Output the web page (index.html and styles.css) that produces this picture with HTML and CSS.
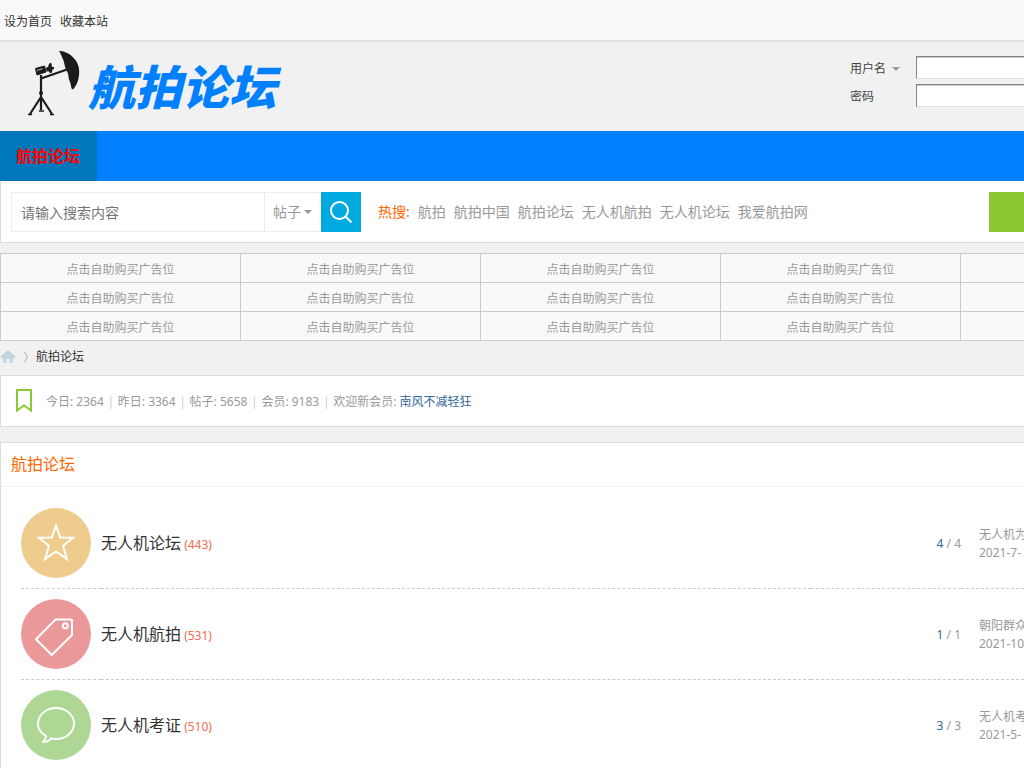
FILE: index.html
```html
<!DOCTYPE html>
<html lang="zh-CN">
<head>
<meta charset="utf-8">
<title>航拍论坛</title>
<link rel="stylesheet" href="styles.css">
</head>
<body>
<div class="page">
  <div class="topbar">
    <a href="#">设为首页</a>
    <a href="#">收藏本站</a>
  </div>
  <header class="header">
    <a class="logo" href="#">
      <svg class="logo-mark" viewBox="0 0 54 66" aria-hidden="true">
        <path d="M31 .7C43 2 51 11 51.200 21c0 8-2 14-6.200 18.500l-1.500-1-1-5-1.500-4-1-6-2.500-5-2-8-3-7z" fill="#1c1a1b"/>
        <path d="M13 28.500L39 19.500M13 25v35M13 47L2 64M13 47l11 17" stroke="#1c1a1b" stroke-width="2.200" fill="none"/>
        <path d="M0 64.500h4M22 64.500h4M11 61h5" stroke="#1c1a1b" stroke-width="1.500"/>
        <circle cx="13" cy="43" r="2" fill="#1c1a1b"/>
        <path d="M7.500 18.500l9-2.500 1.500 6-9 3z" fill="#1c1a1b" stroke="#1c1a1b" stroke-linejoin="round"/>
        <path d="M9 20.500l5.500-1.800" stroke="#bbb" stroke-width="1"/>
        <path d="M18 17.500l2-.5 1-3 1.500-1.200 1 .8.500 3.500h2v2l-1.500.5-.5 3-1.500.7-2-2-2 .2z" fill="#1c1a1b"/>
      </svg>
      <span class="logo-text">航拍论坛</span>
    </a>
    <form class="login">
      <div class="login-row">
        <span class="login-label"><select class="user-select" aria-label="登录方式"><option>用户名</option></select><i class="caret"></i></span>
        <input class="login-input" type="text" aria-label="用户名">
      </div>
      <div class="login-row">
        <label class="login-label" for="pw">密码</label>
        <input class="login-input" id="pw" type="password">
      </div>
    </form>
  </header>
  <nav class="nav"><a class="nav-item" href="#">航拍论坛</a></nav>
  <div class="search-panel">
    <form class="search">
      <input class="search-input" type="text" placeholder="请输入搜索内容" aria-label="搜索">
      <span class="search-type"><select class="type-select" aria-label="搜索类型"><option>帖子</option></select><i class="caret"></i></span>
      <button class="search-button" type="button" aria-label="搜索">
        <svg width="24" height="24" viewBox="0 0 24 24" fill="none" stroke="#fff" stroke-width="2" aria-hidden="true"><circle cx="10.500" cy="10.500" r="8.500"/><path d="M16.500 16.500l6 6"/></svg>
      </button>
    </form>
    <div class="hot">
      <strong class="hot-title">热搜:</strong>
      <a href="#">航拍</a><a href="#">航拍中国</a><a href="#">航拍论坛</a><a href="#">无人机航拍</a><a href="#">无人机论坛</a><a href="#">我爱航拍网</a>
    </div>
    <button class="post-button" type="button" aria-label="发帖"></button>
  </div>
  <table class="ads">
    <tr><td><a href="#">点击自助购买广告位</a></td><td><a href="#">点击自助购买广告位</a></td><td><a href="#">点击自助购买广告位</a></td><td><a href="#">点击自助购买广告位</a></td><td></td></tr>
    <tr><td><a href="#">点击自助购买广告位</a></td><td><a href="#">点击自助购买广告位</a></td><td><a href="#">点击自助购买广告位</a></td><td><a href="#">点击自助购买广告位</a></td><td></td></tr>
    <tr><td><a href="#">点击自助购买广告位</a></td><td><a href="#">点击自助购买广告位</a></td><td><a href="#">点击自助购买广告位</a></td><td><a href="#">点击自助购买广告位</a></td><td></td></tr>
  </table>
  <div class="crumbs">
    <a href="#" aria-label="首页"><svg width="16" height="14" viewBox="0 0 16 14" aria-hidden="true"><path d="M8 1l8 7h-3v5H9.500V9h-3v4H3V8H0z" fill="#c3d5e1"/><path d="M1 7l7-6 7 6" fill="none" stroke="#b5c4ce"/></svg></a>
    <svg width="4" height="12" viewBox="0 0 4 12" fill="none" stroke="#aaa" aria-hidden="true"><path d="M0.500 1l3 5-3 5"/></svg>
    <a href="#">航拍论坛</a>
  </div>
  <div class="stats">
    <svg width="16" height="24" viewBox="0 0 16 24" fill="none" stroke="#8cc832" stroke-width="2" aria-hidden="true"><path d="M1 1h14v20.500l-7-5-7 5z"/></svg>
    <p class="stats-text"><span>今日: 2364</span><i class="pipe">|</i><span>昨日: 3364</span><i class="pipe">|</i><span>帖子: 5658</span><i class="pipe">|</i><span>会员: 9183</span><i class="pipe">|</i><span>欢迎新会员: <a href="#">南风不减轻狂</a></span></p>
  </div>
  <section class="board">
    <h2 class="board-title"><a href="#">航拍论坛</a></h2>
    <div class="board-body">
    <table class="forums">
      <tr>
        <td class="col-icon"><span class="disc disc-star"><svg width="40" height="40" viewBox="0 0 40 40" fill="none" stroke="#fff" stroke-width="2" aria-hidden="true"><path d="M20 2.500l4.300 12 12.700.3-10 8.200L31 36l-11-7.500L9 36l4-13L3 14.800l12.700-.3z"/></svg></span></td>
        <td class="col-name"><a href="#">无人机论坛</a> <em>(443)</em></td>
        <td class="col-count"><b>4</b> / 4</td>
        <td class="col-last"><a href="#">无人机为</a><br>2021-7-</td>
      </tr>
      <tr>
        <td class="col-icon"><span class="disc disc-tag"><svg width="40" height="40" viewBox="0 0 40 40" fill="none" stroke="#fff" stroke-width="2" stroke-linejoin="round" overflow="visible" aria-hidden="true"><path d="M19.500 5.500H35l1 1V21L15.700 41 0 25.300z"/><circle cx="29.300" cy="11.700" r="2.500"/></svg></span></td>
        <td class="col-name"><a href="#">无人机航拍</a> <em>(531)</em></td>
        <td class="col-count"><b>1</b> / 1</td>
        <td class="col-last"><a href="#">朝阳群众</a><br>2021-10</td>
      </tr>
      <tr>
        <td class="col-icon"><span class="disc disc-chat"><svg width="40" height="40" viewBox="0 0 40 40" fill="none" stroke="#fff" stroke-width="2" stroke-linejoin="round" aria-hidden="true"><path d="M10 31C5 28 2 24 2 19 2 10 10 3 20 3s18 7 18 15.500S30 34 20 34l-5-.5c-2 2.500-5 3.500-8 3.500 2-2 3-3.500 3-6z"/></svg></span></td>
        <td class="col-name"><a href="#">无人机考证</a> <em>(510)</em></td>
        <td class="col-count"><b>3</b> / 3</td>
        <td class="col-last"><a href="#">无人机考</a><br>2021-5-</td>
      </tr>
    </table>
    </div>
  </section>
</div>
</body>
</html>
```
FILE: styles.css
```css
* { box-sizing: border-box; }
body {
  margin: 0;
  overflow-x: hidden;
  background: #f1f1f1;
  color: #444;
  font: 12px/18px "Noto Sans", "Noto Sans CJK SC", sans-serif;
}
a { color: inherit; text-decoration: none; }
input, select, button { font: inherit; color: inherit; }
table { border-collapse: collapse; border-spacing: 0; }
.page { min-width: 1200px; }
.caret {
  border: 4px solid transparent;
  border-top-color: #999;
  border-bottom: 0;
}
.topbar {
  display: flex;
  gap: 8px;
  height: 41px;
  padding: 13px 4px 9px;
  background: #f9f9f9;
  border-bottom: 1px solid #ddd;
  box-shadow: 0 1px 2px #e4e4e4;
  color: #333;
}
.header {
  display: flex;
  justify-content: space-between;
  height: 90px;
}
.logo { display: flex; padding: 9px 0 0 28px; gap: 6px; color: #0080ff; }
.logo-mark { width: 54px; height: 66px; }
.logo-text {
  padding-top: 12px;
  font-size: 47px;
  line-height: 50px;
  font-weight: 900;
  font-style: italic;
}
.login {
  display: flex;
  flex-direction: column;
  gap: 5px;
  width: 350px;
  padding-top: 15px;
}
.login-row { display: flex; align-items: center; }
.login-label { display: flex; align-items: center; gap: 5px; width: 66px; padding-top: 2px; }
.user-select, .type-select {
  appearance: none;
  padding: 0;
  border: 0;
  background: transparent;
}
.login-input {
  width: 140px;
  height: 23px;
  padding: 2px 4px;
  border: 1px solid;
  border-color: #848484 #e0e0e0 #e0e0e0 #848484;
  background: #fff;
  box-shadow: inset 0 1px 0 #ccc;
}
.nav { display: flex; background: #0080ff; }
.nav-item {
  padding: 0 16px;
  border-right: 1px solid #0077bb;
  background: #0077bb;
  color: #f00;
  font-size: 16px;
  line-height: 50px;
  font-weight: 700;
}
.search-panel {
  display: flex;
  align-items: center;
  padding: 11px 10px 10px;
  border: 1px solid #ddd;
  border-top: 0;
  background: #fff;
  color: #999;
  font-size: 14px;
  line-height: 20px;
}
.search { display: flex; height: 40px; }
.search-input {
  width: 254px;
  padding: 2px 9px 0;
  border: 1px solid #ededed;
}
.search-input::placeholder { color: #757575; }
.search-type {
  display: flex;
  align-items: center;
  gap: 3px;
  width: 56px;
  padding-left: 8px;
  border: 1px solid #ededed;
  border-width: 1px 0;
}
.search-button {
  display: grid;
  place-items: center;
  width: 40px;
  padding: 0;
  border: 0;
  background: #00a9de;
}
.hot { display: flex; gap: 8px; padding-left: 17px; }
.hot-title { color: #f60; font-weight: 400; }
.post-button {
  width: 200px;
  height: 40px;
  margin-left: auto;
  border: 0;
  background: #8cc832;
}
.ads {
  width: calc(100% + 1px);
  margin-top: 10px;
  table-layout: fixed;
  background: #f9f9f9;
  color: #999;
  text-align: center;
}
.ads td { height: 29px; padding: 6px 0 2px; border: 1px solid #ccc; line-height: 16px; }
.crumbs {
  display: flex;
  align-items: center;
  gap: 8px;
  height: 34px;
  padding-bottom: 3px;
  color: #333;
}
.crumbs a, .crumbs svg { display: block; }
.stats {
  display: flex;
  align-items: center;
  gap: 14px;
  height: 52px;
  padding: 0 15px;
  border: 1px solid #ddd;
  background: #fff;
  color: #999;
}
.stats-text { display: flex; margin: 0; padding-top: 2px; }
.stats-text a { color: #369; }
.pipe { width: 14px; color: #ccc; font-style: normal; text-align: center; }
.board { margin-top: 15px; border: 1px solid #ddd; background: #fff; }
.board-title {
  margin: 0;
  padding: 0 10px;
  border-bottom: 1px solid #ededed;
  color: #f60;
  font-size: 16px;
  line-height: 43px;
  font-weight: 400;
}
.board-body { padding: 11px 20px 0; }
.forums { width: 100%; table-layout: fixed; border-collapse: separate; color: #999; }
.forums td { height: 91px; padding: 2px 0 0; border-bottom: 1px dashed #ccc; }
.forums .col-icon { width: 80px; padding: 0; }
.forums .col-count { width: 150px; text-align: right; }
.forums .col-last { width: 218px; padding-left: 18px; }
.col-name a { color: #333; font-size: 16px; }
.col-name em { color: #f26c4f; font-style: normal; }
.col-count b { color: #369; font-weight: 400; }
.disc { display: grid; place-items: center; width: 70px; height: 70px; border-radius: 50%; }
.disc-star { background: #efcb8d; }
.disc-tag { background: #eb9898; }
.disc-chat { background: #aed695; }
```
